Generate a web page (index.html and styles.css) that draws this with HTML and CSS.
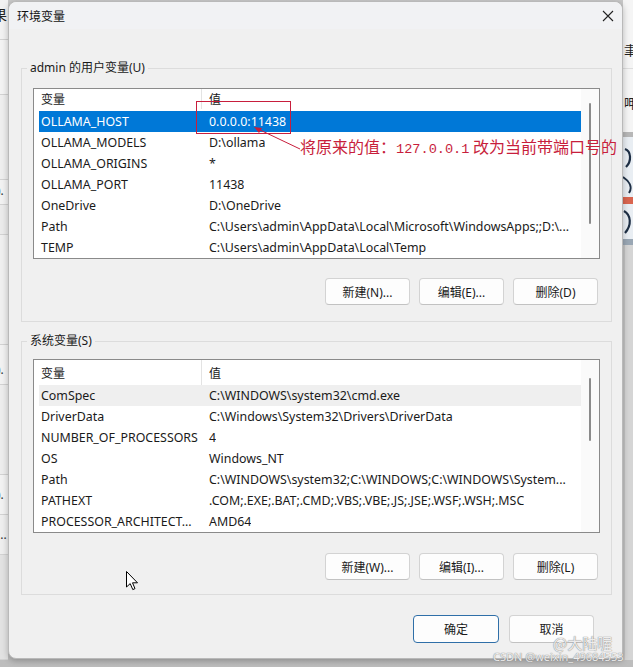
FILE: index.html
```html
<!DOCTYPE html>
<html lang="zh-CN">
<head>
<meta charset="utf-8">
<title>环境变量</title>
<link rel="stylesheet" href="styles.css">
</head>
<body>
<div class="screen">
  <div class="bg-left">
    <div class="lc lc1"><span class="clip">果</span></div>
    <div class="lc lc2"></div>
    <div class="lc lc3"></div>
    <div class="lc lc4"><span class="clip2">).</span></div>
    <div class="lc lc5"></div>
    <div class="lc lc6"></div>
    <div class="lc lc7"><span class="clip2">).</span></div>
    <div class="lc lc8"></div>
    <div class="lc lc9"><span class="clip2">).</span></div>
    <div class="lc lc10"><span class="clip2">...</span></div>
    <div class="lc lc11"></div>
  </div>

  <div class="dialog">
    <div class="titlebar">
      <span class="title">环境变量</span>
      <svg class="close" width="12" height="12" viewBox="0 0 12 12"><path d="M1 1 L11 11 M11 1 L1 11" stroke="#222" stroke-width="1.1" fill="none"/></svg>
    </div>
    <div class="content">
      <fieldset class="group group-user">
        <legend>admin 的用户变量(U)</legend>
        <div class="list list-user">
          <div class="list-body">
            <div class="hdr hdr-user"><div class="c1">变量</div><div class="c2">值</div></div>
            <div class="row selected"><div class="c1">OLLAMA_HOST</div><div class="c2">0.0.0.0:11438</div></div>
            <div class="row"><div class="c1">OLLAMA_MODELS</div><div class="c2">D:\ollama</div></div>
            <div class="row"><div class="c1">OLLAMA_ORIGINS</div><div class="c2">*</div></div>
            <div class="row"><div class="c1">OLLAMA_PORT</div><div class="c2">11438</div></div>
            <div class="row"><div class="c1">OneDrive</div><div class="c2">D:\OneDrive</div></div>
            <div class="row"><div class="c1">Path</div><div class="c2">C:\Users\admin\AppData\Local\Microsoft\WindowsApps;;D:\...</div></div>
            <div class="row"><div class="c1">TEMP</div><div class="c2">C:\Users\admin\AppData\Local\Temp</div></div>
          </div>
          <div class="scroll"><div class="thumb thumb-user"></div></div>
        </div>
        <div class="btns">
          <button class="btn">新建(N)...</button>
          <button class="btn">编辑(E)...</button>
          <button class="btn">删除(D)</button>
        </div>
      </fieldset>

      <fieldset class="group group-sys">
        <legend>系统变量(S)</legend>
        <div class="list list-sys">
          <div class="list-body">
            <div class="hdr hdr-sys"><div class="c1">变量</div><div class="c2">值</div></div>
            <div class="row hover"><div class="c1">ComSpec</div><div class="c2">C:\WINDOWS\system32\cmd.exe</div></div>
            <div class="row"><div class="c1">DriverData</div><div class="c2">C:\Windows\System32\Drivers\DriverData</div></div>
            <div class="row"><div class="c1">NUMBER_OF_PROCESSORS</div><div class="c2">4</div></div>
            <div class="row"><div class="c1">OS</div><div class="c2">Windows_NT</div></div>
            <div class="row"><div class="c1">Path</div><div class="c2">C:\WINDOWS\system32;C:\WINDOWS;C:\WINDOWS\System...</div></div>
            <div class="row"><div class="c1">PATHEXT</div><div class="c2">.COM;.EXE;.BAT;.CMD;.VBS;.VBE;.JS;.JSE;.WSF;.WSH;.MSC</div></div>
            <div class="row"><div class="c1">PROCESSOR_ARCHITECT...</div><div class="c2">AMD64</div></div>
          </div>
          <div class="scroll"><div class="thumb thumb-sys"></div></div>
        </div>
        <div class="btns btns-sys">
          <button class="btn">新建(W)...</button>
          <button class="btn">编辑(I)...</button>
          <button class="btn">删除(L)</button>
        </div>
      </fieldset>

      <div class="footer">
        <button class="btn btn-lg btn-primary">确定</button>
        <button class="btn btn-lg">取消</button>
      </div>
    </div>
  </div>

  <div class="bg-right">
    <div class="r-top">
      <div class="r-ch r-ch1">聿</div>
      <div class="r-line"></div>
      <div class="r-ch r-ch2">呷</div>
    </div>
    <div class="r-band"></div>
    <div class="r-img">
      <svg width="10" height="108" viewBox="0 0 10 108">
        <rect width="10" height="108" fill="#e9eef3"/>
        <path d="M2 12 C8 14 9 24 3 30" stroke="#1e2f45" stroke-width="2.2" fill="none"/>
        <path d="M0 40 C6 44 10 50 6 56" stroke="#1e2f45" stroke-width="2" fill="none"/>
        <rect x="0" y="60" width="10" height="7" fill="#d9654f"/>
        <path d="M1 74 C8 78 9 88 2 96" stroke="#1e2f45" stroke-width="2.2" fill="none"/>
        <rect x="0" y="102" width="10" height="6" fill="#9aa7b4"/>
      </svg>
    </div>
    <div class="r-rest"></div>
  </div>

  <div class="annot-box"></div>
  <svg class="annot-arrow" width="60" height="34" viewBox="0 0 60 34">
    <path d="M48 27 L6 7" stroke="#c81e3c" stroke-width="1" fill="none"/>
    <path d="M2 5 L10 6 L7 11 Z" fill="#c81e3c"/>
  </svg>
  <div class="annot-text">将原来的值：<span class="mono">127.0.0.1</span> 改为当前带端口号的</div>

  <svg class="cursor" width="13" height="20" viewBox="0 0 13 20">
    <path d="M0.5 0.5 L0.5 16 L4.2 12.6 L6.8 18.6 L9 17.6 L6.5 11.8 L11.5 11.8 Z" fill="#fff" stroke="#000" stroke-width="1" stroke-linejoin="round"/>
  </svg>

  <div class="wm wm1">@大陆喔</div>
  <div class="wm wm2">CSDN @weixin_49684553</div>
</div>
</body>
</html>
```
FILE: styles.css
```css
* { box-sizing: border-box; }
html, body { margin: 0; padding: 0; }
body {
  width: 633px;
  height: 667px;
  overflow: hidden;
  font-family: "Noto Sans", "Noto Sans CJK SC", sans-serif;
  font-size: 12px;
  color: #1a1a1a;
}
.screen {
  position: relative;
  width: 633px;
  height: 667px;
  display: flex;
  align-items: flex-start;
  background: linear-gradient(#c9c9c9, #bdbdbd);
}

/* background windows */
.bg-left {
  width: 8px;
  height: 660px;
  display: flex;
  flex-direction: column;
  background: #e9e9e9;
  overflow: hidden;
}
.lc { border-bottom: 1px solid #d2d2d2; flex: none; overflow: hidden; white-space: nowrap; }
.lc1 { height: 40px; background: #f2f2f2; line-height: 30px; font-size: 14px; }
.lc2 { height: 55px; background: #f3f3f3; }
.lc3 { height: 85px; background: #eeeeee; }
.lc4 { height: 25px; background: #f2f2f2; line-height: 22px; }
.lc5 { height: 30px; background: #ebebeb; }
.lc6 { height: 110px; background: #efefef; }
.lc7 { height: 40px; background: #f2f2f2; line-height: 50px; }
.lc8 { height: 90px; background: #ededed; }
.lc9 { height: 40px; background: #f2f2f2; line-height: 40px; }
.lc10 { height: 40px; background: #eeeeee; line-height: 40px; }
.lc11 { flex: 1; background: #e2e2e2; }
.clip { display: inline-block; margin-left: -7px; color: #222; }
.clip2 { display: inline-block; margin-left: -3px; color: #333; }

.bg-right {
  width: 10px;
  height: 660px;
  display: flex;
  flex-direction: column;
  overflow: hidden;
}
.r-top { height: 132px; background: #f5f5f5; display: flex; flex-direction: column; }
.r-ch { font-size: 13px; line-height: 16px; white-space: nowrap; margin-left: 1px; color: #222; }
.r-ch1 { margin-top: 42px; }
.r-line { height: 1px; background: #dedede; margin-top: 10px; }
.r-ch2 { margin-top: 26px; }
.r-band { height: 5px; background: #b7b7b7; }
.r-img { height: 108px; }
.r-img svg { display: block; }
.r-rest { flex: 1; background: #d5d5d5; border-left: 2px solid #c4c4c4; }

/* dialog */
.dialog {
  width: 615px;
  height: 658px;
  margin-top: 1px;
  background: #f0f0f0;
  border: 1px solid #b9b9b9;
  border-radius: 8px 8px 4px 8px;
  box-shadow: 0 2px 6px rgba(0,0,0,0.25);
  display: flex;
  flex-direction: column;
  position: relative;
  z-index: 1;
}
.titlebar {
  height: 27px;
  display: flex;
  align-items: center;
  justify-content: space-between;
  padding: 0 8px 0 8px;
  background: #f1f2f4;
  border-radius: 8px 8px 0 0;
}
.title { font-size: 12px; color: #111; }

.content {
  padding: 0 10px 0 12px;
  display: flex;
  flex-direction: column;
}

.group {
  margin: 0;
  border: 1px solid #dcdcdc;
  padding: 12px 11px 16px 11px;
  min-width: 0;
}
.group legend {
  padding: 0 3px;
  margin-left: -6px;
  line-height: 16px;
  color: #1a1a1a;
}
.group-user { margin-top: 31px; }
.group-sys { margin-top: 11px; padding-top: 10px; padding-bottom: 14px; }

.list {
  display: flex;
  background: #fff;
  border: 1px solid #8a8a8a;
}
.list-body { flex: 1; padding-left: 5px; min-width: 0; }
.scroll {
  width: 18px;
  background: #fafafa;
  display: flex;
  justify-content: center;
}
.thumb { width: 2px; background: #8b8b8b; border-radius: 1px; }
.thumb-user { margin-top: 14px; height: 121px; }
.thumb-sys { margin-top: 18px; height: 63px; }

.hdr, .row { display: flex; white-space: nowrap; }
.hdr { align-items: center; }
.hdr-user { height: 22px; padding-bottom: 2px; }
.hdr-sys { height: 25px; }
.hdr .c1 { border-right: 1px solid #e3e3e3; align-self: stretch; display: flex; align-items: center; }
.c1 { width: 163px; padding-left: 2px; flex: none; overflow: hidden; }
.c2 { padding-left: 7px; overflow: hidden; }
.row { height: 21px; line-height: 21px; font-size: 12.4px; }
.row.selected { background: #0078d7; color: #fff; }
.row.hover { background: #efefef; }

.btns {
  display: flex;
  justify-content: flex-end;
  gap: 9px;
  padding-right: 2px;
  margin-top: 19px;
}
.btns-sys { margin-top: 20px; }
.btn {
  width: 85px;
  height: 27px;
  font: inherit;
  font-size: 12px;
  color: #1a1a1a;
  background: #fdfdfd;
  border: 1px solid #d3d3d3;
  border-bottom-color: #c2c2c2;
  border-radius: 4px;
  padding: 0;
}
.footer {
  display: flex;
  justify-content: flex-end;
  gap: 10px;
  margin-top: 20px;
  padding-right: 18px;
}
.btn-lg { height: 28px; width: 85px; }
.btn-primary { width: 86px; border: 1px solid #2f6fa8; }

/* overlays */
.annot-box {
  position: absolute;
  left: 196px;
  top: 101px;
  width: 95px;
  height: 33px;
  border: 1px solid #c81e3c;
  z-index: 5;
}
.annot-arrow {
  position: absolute;
  left: 252px;
  top: 122px;
  z-index: 5;
}
.annot-text {
  position: absolute;
  left: 300px;
  top: 136px;
  font-family: "Noto Sans CJK SC", sans-serif;
  font-size: 16px;
  line-height: 20px;
  color: #c81e3c;
  white-space: nowrap;
  z-index: 5;
}
.mono { font-family: "Liberation Mono", monospace; font-size: 13.6px; }
.cursor { position: absolute; left: 126px; top: 571px; z-index: 6; }
.wm {
  position: absolute;
  color: rgba(255,255,255,0.85);
  text-shadow: 0 0 1px #8a8a8a, 0 0 1px #8a8a8a;
  white-space: nowrap;
  z-index: 6;
}
.wm1 { left: 553px; top: 634px; font-size: 15px; line-height: 17px; font-family: "Noto Sans CJK SC", sans-serif; }
.wm2 { left: 493px; top: 650px; font-size: 11px; line-height: 13px; }
```
